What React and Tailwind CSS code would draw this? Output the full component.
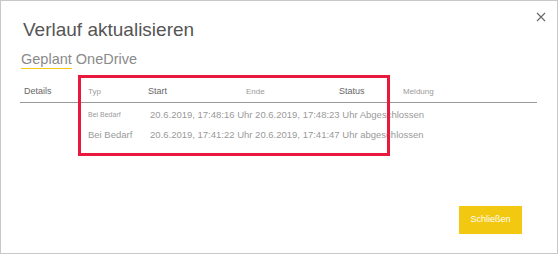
import React from 'react';

const rows = [
    { typ: 'Bei Bedarf', small: true, text: '20.6.2019, 17:48:16 Uhr 20.6.2019, 17:48:23 Uhr Abgeschlossen' },
    { typ: 'Bei Bedarf', small: false, text: '20.6.2019, 17:41:22 Uhr 20.6.2019, 17:41:47 Uhr abgeschlossen' },
];

export default function App() {
    return (
        <div className="relative w-[558px] h-[254px] bg-white border border-[#c8c8c8] flex flex-col font-['Liberation_Sans',Arial,sans-serif] overflow-hidden">
            {/* Header */}
            <div className="flex justify-between items-start pl-[22px] pr-[11px] pt-[18px]">
                <h1 className="text-[19px] leading-[22px] text-[#555]">Verlauf aktualisieren</h1>
                <button className="w-[10px] h-[10px] mt-[-7px] text-[#666]">
                    <svg viewBox="0 0 10 10" className="w-[10px] h-[10px]" fill="none" stroke="currentColor" strokeWidth="1.1">
                        <path d="M1 1 L9 9 M9 1 L1 9" />
                    </svg>
                </button>
            </div>

            {/* Subtitle */}
            <div className="pl-[20px] mt-[9px] text-[14.5px] leading-[18px] text-[#8a8a8a]">
                <span className="border-b border-[#f2c811] pb-[1px]">Geplant</span> OneDrive
            </div>

            {/* Table */}
            <div className="ml-[19px] w-[517px] mt-[13px]">
                <div className="flex items-center h-[22px] border-b border-[#9a9a9a] text-[9px]">
                    <div className="w-[68px] pl-[4px] text-[#666]">Details</div>
                    <div className="w-[60px] text-[#999] text-[8px]">Typ</div>
                    <div className="w-[98px] text-[#666]">Start</div>
                    <div className="w-[93px] text-[#999] text-[8px]">Ende</div>
                    <div className="w-[64px] text-[#666]">Status</div>
                    <div className="text-[#999] text-[8px]">Meldung</div>
                </div>
                {rows.map((row, i) => (
                    <div key={i} className={`flex items-center h-[20px] text-[#9a9a9a] ${i === 0 ? 'mt-[2px]' : ''}`}>
                        <div className="w-[68px]"></div>
                        <div className={`w-[62px] ${row.small ? 'text-[7px]' : 'text-[9.5px]'}`}>{row.typ}</div>
                        <div className="text-[9.5px] whitespace-nowrap">{row.text}</div>
                    </div>
                ))}
            </div>

            {/* Highlight annotation */}
            <div className="absolute left-[77px] top-[74px] w-[312px] h-[81px] border-[3px] border-[#e8193c] pointer-events-none"></div>

            {/* Footer */}
            <div className="mt-auto flex justify-end pr-[35px] pb-[19px]">
                <button className="w-[63px] h-[28px] bg-[#f2c811] text-white text-[9px] flex items-center justify-center">
                    Schließen
                </button>
            </div>
        </div>
    );
}
